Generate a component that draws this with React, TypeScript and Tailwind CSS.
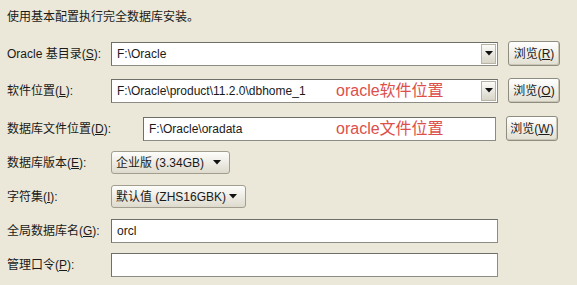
const font = { fontFamily: '"Liberation Sans", "Noto Sans CJK SC", sans-serif' };

function Label({ text, k, width = "w-[104px]" }: { text: string; k: string; width?: string }) {
  return (
    <div className={`${width} shrink-0 text-[12px] text-[#1a1a1a]`}>
      {text}(<u>{k}</u>):
    </div>
  );
}

function Field({ value }: { value?: string }) {
  return (
    <div className="w-[387px] h-[24px] flex items-center bg-white border border-[#8c8c84] border-t-[#6f6f6a] border-l-[#6f6f6a] pl-[5px] text-[12px] text-[#1a1a1a]">
      <span>{value}</span>
    </div>
  );
}

function Arrow() {
  return (
    <svg width="8" height="5" viewBox="0 0 8 5">
      <path d="M0 0h8L4 4.5z" fill="#111" />
    </svg>
  );
}

function Combo({ value, note }: { value: string; note: string }) {
  return (
    <div className="w-[387px] h-[24px] flex bg-white border border-[#8c8c84] border-t-[#6f6f6a] border-l-[#6f6f6a] text-[12px] text-[#1a1a1a]">
      <div className="flex-1 flex items-center pl-[5px]">
        <span className="w-[219px]">{value}</span>
        <span className="text-[16px] text-[#dc4f4b]">{note}</span>
      </div>
      <div className="w-[15px] m-[1px] flex items-center justify-center bg-gradient-to-b from-[#fbfbf8] to-[#d8d5c8] border border-[#b7b4a6]">
        <Arrow />
      </div>
    </div>
  );
}

function Browse({ k }: { k: string }) {
  return (
    <div className="ml-[10px] w-[52px] h-[25px] flex items-center justify-center rounded-[3px] border border-[#8f8d80] bg-gradient-to-b from-[#ffffff] to-[#e2dfd2] shadow-[inset_-1px_-1px_0_#c9c6b6] text-[12px] text-[#1a1a1a]">
      浏览(<u>{k}</u>)
    </div>
  );
}

function Select({ value, w }: { value: string; w: string }) {
  return (
    <div className={`${w} h-[23px] flex items-center justify-between pl-[4px] pr-[8px] rounded-[3px] border border-[#a19e90] bg-gradient-to-b from-[#fdfdfb] to-[#dedbcd] text-[12px] text-[#1a1a1a]`}>
      <span>{value}</span>
      <Arrow />
    </div>
  );
}

export default function App() {
  return (
    <div className="w-[577px] h-[285px] bg-[#ebe8d9] pl-[7px] pt-[9px] overflow-hidden" style={font}>
      <div className="text-[12px] leading-[16px] text-[#1a1a1a]">使用基本配置执行完全数据库安装。</div>

      <div className="mt-[16px] flex items-center">
        <Label text="Oracle 基目录" k="S" />
        <Combo value="F:\Oracle" note="" />
        <Browse k="R" />
      </div>

      <div className="mt-[12px] flex items-center">
        <Label text="软件位置" k="L" />
        <Combo value="F:\Oracle\product\11.2.0\dbhome_1" note="oracle软件位置" />
        <Browse k="O" />
      </div>

      <div className="mt-[13px] flex items-center">
        <Label text="数据库文件位置" k="D" width="w-[136px]" />
        <div className="w-[353px] h-[24px] flex items-center bg-white border border-[#8c8c84] border-t-[#6f6f6a] border-l-[#6f6f6a] pl-[5px] text-[12px] text-[#1a1a1a]">
          <span className="w-[187px]">F:\Oracle\oradata</span>
          <span className="text-[16px] text-[#dc4f4b]">oracle文件位置</span>
        </div>
        <Browse k="W" />
      </div>

      <div className="mt-[10px] flex items-center">
        <Label text="数据库版本" k="E" />
        <Select value="企业版 (3.34GB)" w="w-[119px]" />
      </div>

      <div className="mt-[11px] flex items-center">
        <Label text="字符集" k="I" />
        <Select value="默认值 (ZHS16GBK)" w="w-[135px]" />
      </div>

      <div className="mt-[11px] flex items-center">
        <Label text="全局数据库名" k="G" />
        <Field value="orcl" />
      </div>

      <div className="mt-[10px] flex items-center">
        <Label text="管理口令" k="P" />
        <Field />
      </div>
    </div>
  );
}
